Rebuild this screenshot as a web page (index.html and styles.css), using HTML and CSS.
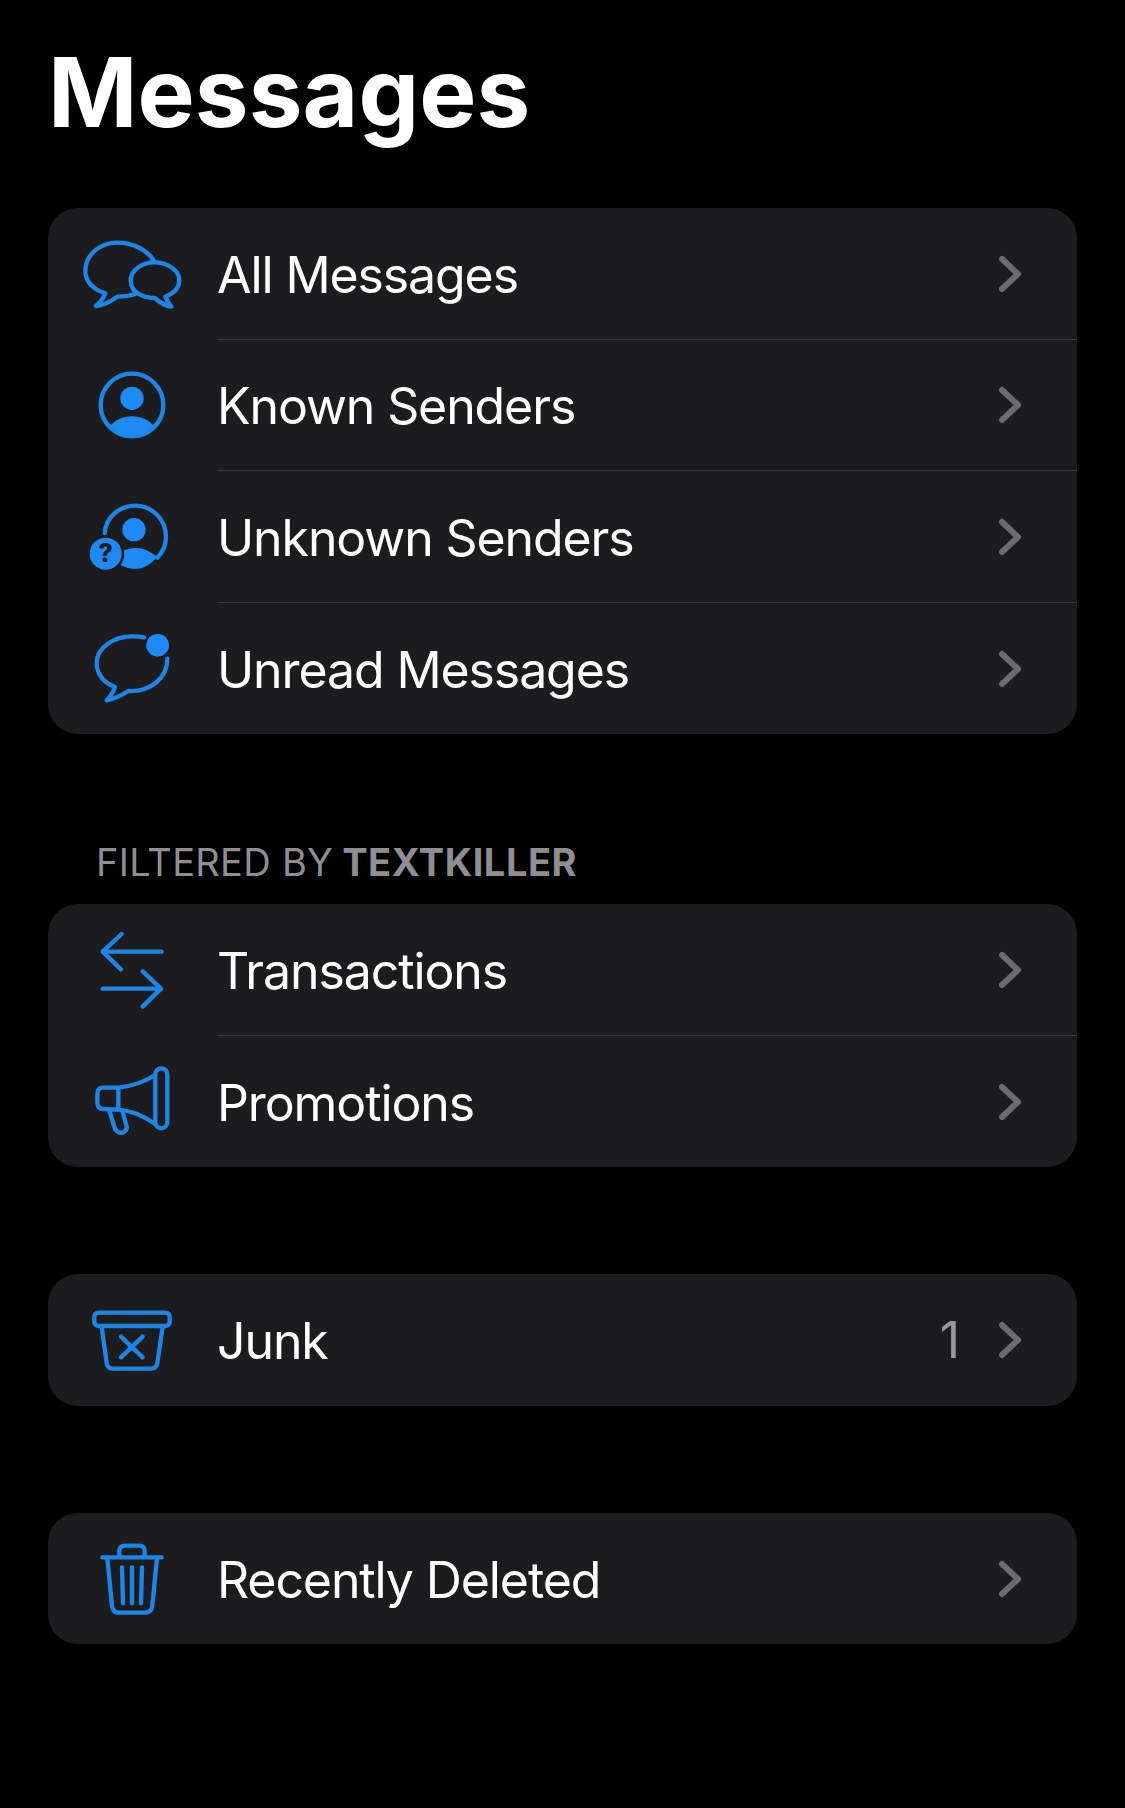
FILE: index.html
```html
<!DOCTYPE html>
<html lang="en">
<head>
<meta charset="utf-8">
<title>Messages</title>
<link rel="stylesheet" href="styles.css">
</head>
<body>
<main class="page">
  <h1 class="title">Messages</h1>

  <section class="card">
    <div class="row">
      <svg class="icon" viewBox="51 -5 330 330"><path class="line" d="M283 122C262 88 220 66 172 66C118 66 76 104 76 150C76 180 96 204 136 218C130 232 120 246 108 256C135 254 155 240 172 228C190 228 208 226 226 220"/><path class="line" d="M283 125C244 125 212 150 212 180C212 212 244 232 284 232C300 246 318 256 334 258C326 248 320 238 316 228C342 218 358 200 358 178C358 150 324 125 283 125Z"/></svg>
      <div class="body"><span class="label">All Messages</span><svg class="chev" viewBox="0 0 24 38"><path d="M4 4L20 19L4 34"/></svg></div>
    </div>
    <div class="row">
      <svg class="icon" viewBox="51 391 330 330"><circle class="line" cx="216" cy="556" r="94"/><circle class="fill" cx="216" cy="536" r="35"/><path class="fill" d="M148 622C165 600 190 590 216 590C242 590 267 600 284 622C262 642 240 652 216 652C192 652 170 642 148 622Z"/></svg>
      <div class="body"><span class="label">Known Senders</span><svg class="chev" viewBox="0 0 24 38"><path d="M4 4L20 19L4 34"/></svg></div>
    </div>
    <div class="row">
      <svg class="icon" viewBox="51 7 330 330"><path class="line" d="M134 160C138 112 178 78 226 78C277 78 318 120 318 172C318 196 308 218 292 234"/><circle class="fill" cx="222" cy="150" r="35"/><path class="fill" d="M150 235C175 215 205 205 226 205C250 205 270 215 292 232C270 255 250 268 226 268C205 268 175 258 150 235Z"/><circle class="badge" cx="137" cy="222" r="48"/><text class="qmark" x="137" y="248">?</text></svg>
      <div class="body"><span class="label">Unknown Senders</span><svg class="chev" viewBox="0 0 24 38"><path d="M4 4L20 19L4 34"/></svg></div>
    </div>
    <div class="row">
      <svg class="icon" viewBox="51 403 330 330"><path class="line" d="M252 476C240 474 228 473 216 473C158 473 110 510 110 553C110 585 130 612 165 625C160 640 150 655 140 665C165 660 185 650 205 637C270 640 322 600 322 540"/><circle class="fill" cx="293" cy="500" r="34"/></svg>
      <div class="body last"><span class="label">Unread Messages</span><svg class="chev" viewBox="0 0 24 38"><path d="M4 4L20 19L4 34"/></svg></div>
    </div>
  </section>

  <h2 class="section-head">FILTERED BY <b>TEXTKILLER</b></h2>

  <section class="card">
    <div class="row">
      <svg class="icon" viewBox="51 45 330 330"><path class="line" d="M128 155H305M185 102L128 155L183 208M128 266H303M248 214L303 266L248 320"/></svg>
      <div class="body"><span class="label">Transactions</span><svg class="chev" viewBox="0 0 24 38"><path d="M4 4L20 19L4 34"/></svg></div>
    </div>
    <div class="row">
      <svg class="icon" viewBox="51 441 330 330"><rect class="line" x="286" y="508" width="36" height="180" rx="18"/><path class="line" d="M286 528C250 550 215 562 175 566H130Q112 566 112 585V610Q112 630 130 630L175 632C215 635 250 650 286 675M175 566V632M147 632L165 690Q175 705 190 700Q205 692 198 675L187 635"/></svg>
      <div class="body last"><span class="label">Promotions</span><svg class="chev" viewBox="0 0 24 38"><path d="M4 4L20 19L4 34"/></svg></div>
    </div>
  </section>

  <section class="card card-junk">
    <div class="row">
      <svg class="icon" viewBox="51 15 330 330"><rect class="line" x="103" y="98" width="226" height="40" rx="12"/><path class="line" d="M125 140L140 250Q143 266 160 266H272Q290 266 292 250L308 140M183 170L248 232M248 170L183 232"/></svg>
      <div class="body last"><span class="label">Junk</span><span class="count">1</span><svg class="chev" viewBox="0 0 24 38"><path d="M4 4L20 19L4 34"/></svg></div>
    </div>
  </section>

  <section class="card card-deleted">
    <div class="row">
      <svg class="icon" viewBox="51 727 330 330"><path class="line" d="M178 828V812Q178 795 195 795H238Q254 795 254 812V828M127 830H305M142 832L156 975Q158 996 178 996H255Q275 996 277 975L291 832M186 860L189 968M216 860V968M246 860L243 968"/></svg>
      <div class="body last"><span class="label">Recently Deleted</span><svg class="chev" viewBox="0 0 24 38"><path d="M4 4L20 19L4 34"/></svg></div>
    </div>
  </section>
</main>
</body>
</html>
```

FILE: styles.css
```css
* { box-sizing: border-box; }

html, body {
  margin: 0;
  background: #000;
}

body {
  width: 1125px;
  height: 1808px;
  overflow: hidden;
  font-family: Inter, "Liberation Sans", sans-serif;
  color: #fff;
}

.page {
  padding: 0 48px;
}

.title {
  margin: 0;
  padding: 34px 0 0;
  height: 208px;
  font-size: 96px;
  line-height: 116px;
  font-weight: 700;
  letter-spacing: 0.1px;
}

.card {
  background: #1c1c1e;
  border-radius: 30px;
  overflow: hidden;
}

.row {
  display: flex;
  align-items: center;
  height: 131.5px;
  padding-left: 29px;
}

.icon {
  flex: none;
  width: 110px;
  height: 110px;
  margin-right: 30px;
}

.body {
  flex: 1;
  height: 100%;
  display: flex;
  align-items: center;
  padding-right: 55px;
  border-bottom: 1px solid #38383a;
}

.body.last {
  border-bottom: 0;
}

.label {
  flex: 1;
  padding-top: 3px;
  font-size: 50px;
  line-height: 60px;
  letter-spacing: -1.1px;
  color: #fff;
}

.count {
  margin-right: 38px;
  font-size: 50px;
  line-height: 60px;
  color: #98989e;
}

.chev {
  flex: none;
  width: 24px;
  height: 38px;
  margin-top: 1px;
}

.chev path {
  fill: none;
  stroke: #6c6c70;
  stroke-width: 6;
  stroke-linecap: round;
  stroke-linejoin: round;
}

.line {
  fill: none;
  stroke: #1c86e8;
  stroke-width: 13;
  stroke-linecap: round;
  stroke-linejoin: round;
}

.fill {
  fill: #1e8bf5;
}

.badge {
  fill: #1e8bf5;
  stroke: #1c1c1e;
  stroke-width: 16;
  paint-order: stroke;
}

.qmark {
  fill: #1c1c1e;
  font-family: Inter, "Liberation Sans", sans-serif;
  font-size: 76px;
  font-weight: 800;
  text-anchor: middle;
}

.section-head {
  margin: 0;
  padding: 106px 0 0 48px;
  height: 170px;
  font-size: 38px;
  line-height: 44px;
  font-weight: 400;
  letter-spacing: 0.3px;
  color: #8e8e93;
}

.section-head b {
  margin-left: -2px;
  font-weight: 700;
  letter-spacing: 0.55px;
}

.card-junk,
.card-deleted {
  margin-top: 107px;
}
```
